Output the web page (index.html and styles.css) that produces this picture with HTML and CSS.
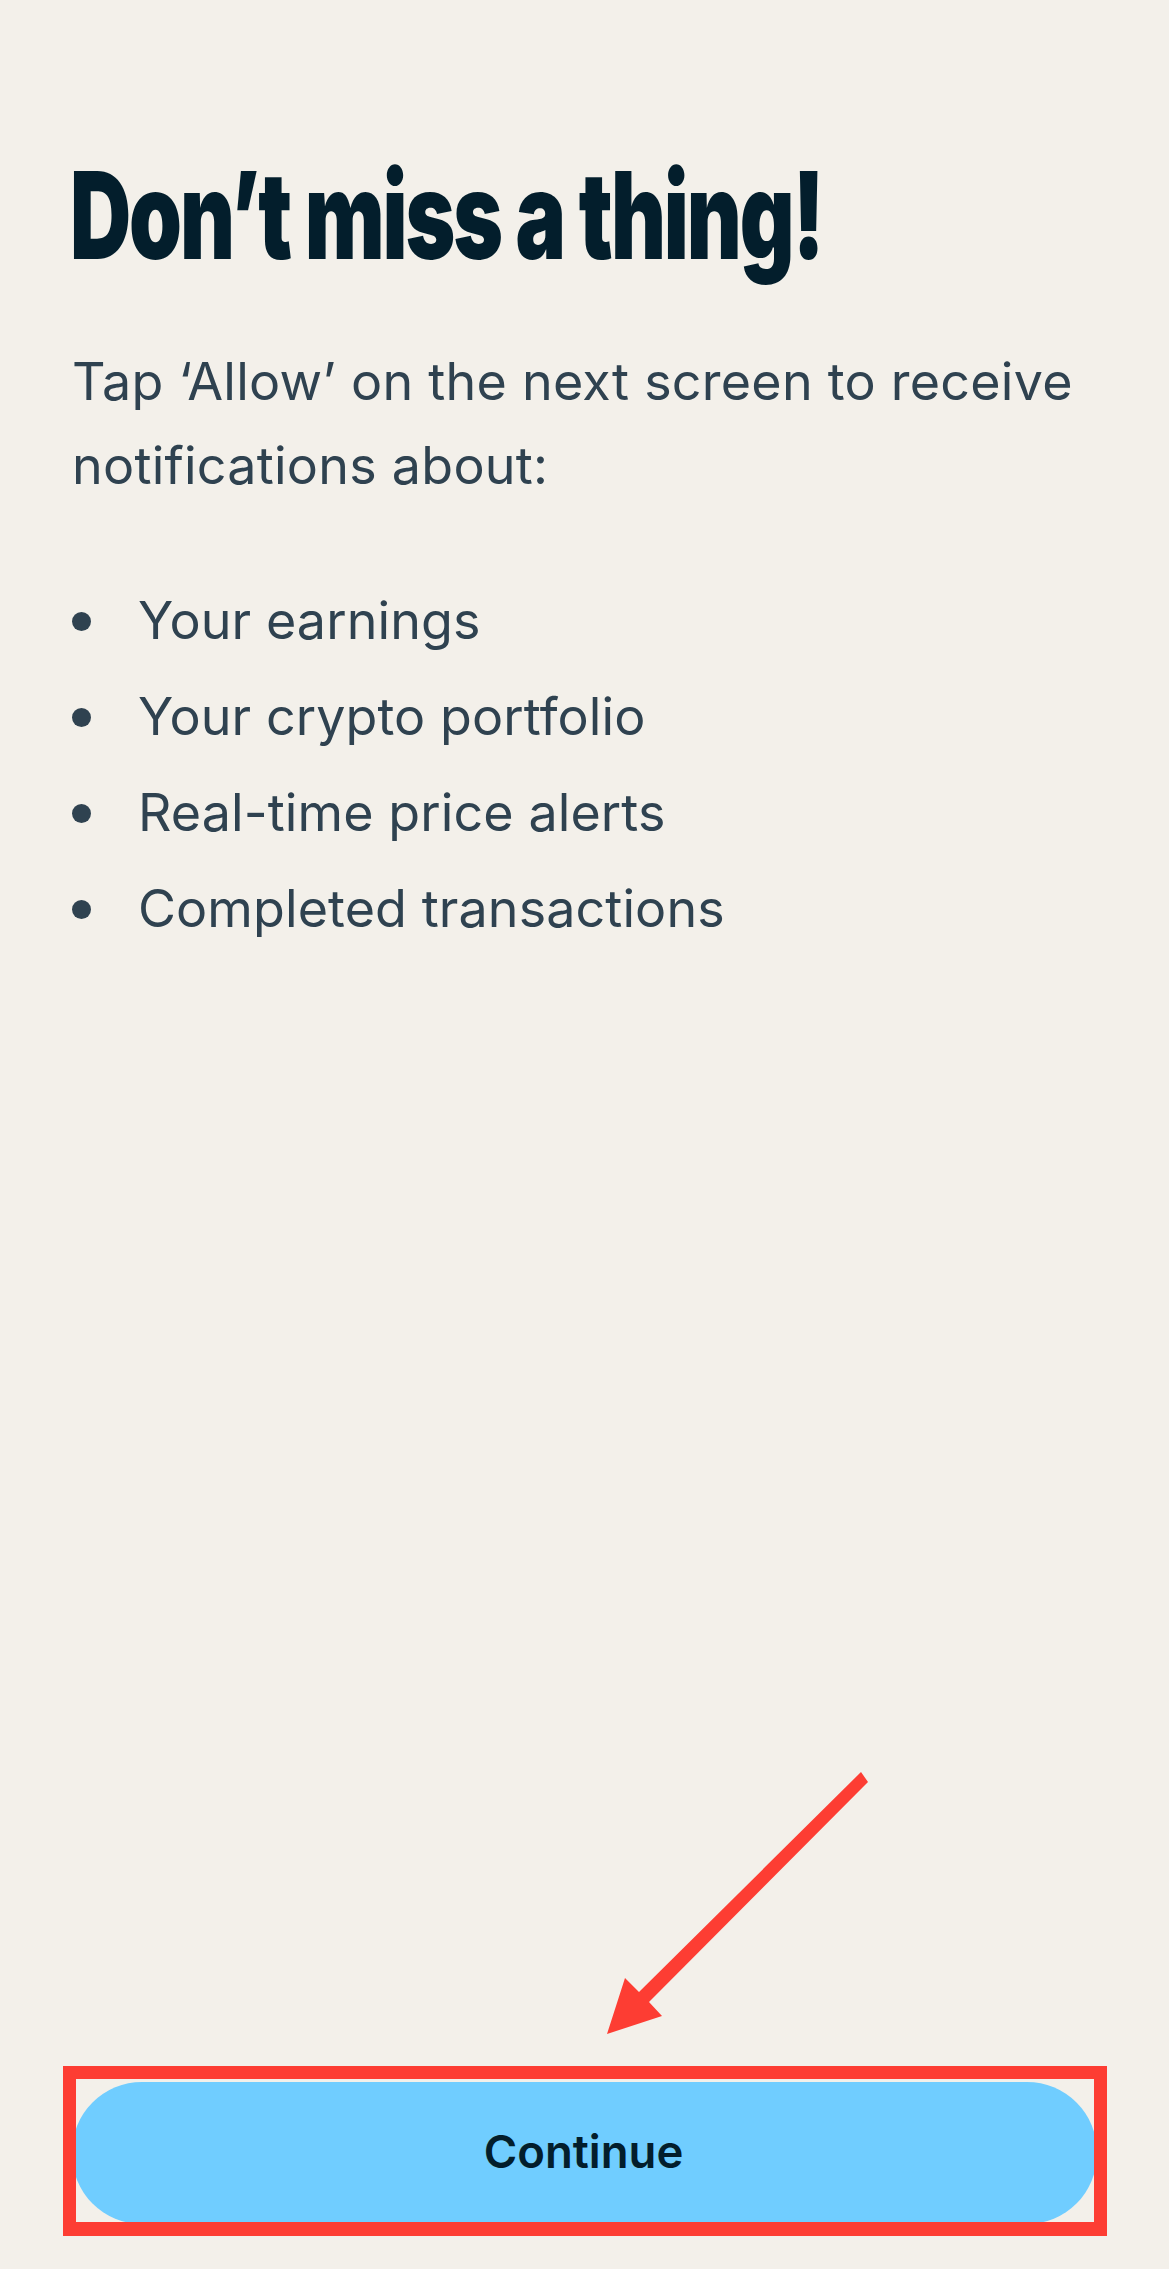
FILE: index.html
```html
<!DOCTYPE html>
<html lang="en">
<head>
<meta charset="utf-8">
<title>Don’t miss a thing!</title>
<link rel="stylesheet" href="styles.css">
</head>
<body>
<main class="screen">
  <h1 class="title">Don’t miss a thing!</h1>
  <p class="intro">Tap ‘Allow’ on the next screen to receive notifications about:</p>
  <ul class="topics">
    <li class="topic">Your earnings</li>
    <li class="topic">Your crypto portfolio</li>
    <li class="topic">Real-time price alerts</li>
    <li class="topic">Completed transactions</li>
  </ul>
  <button class="cta" type="button">Continue</button>
  <svg class="arrow" width="1169" height="2269" viewBox="0 0 1169 2269" aria-hidden="true">
    <path class="arrow-shape" d="M861 1772 L868 1782 L649 2002 L662 2016 L607 2034 L625 1978 L639 1992 Z"/>
  </svg>
  <div class="highlight"></div>
</main>
</body>
</html>
```
FILE: styles.css
```css
html, body {
  margin: 0;
  padding: 0;
  background: #f3f0ea;
}

.screen {
  position: relative;
  box-sizing: border-box;
  width: 1169px;
  height: 2269px;
  padding: 0 72px 45px;
  display: flex;
  flex-direction: column;
  overflow: hidden;
  font-family: Inter, "Noto Sans", sans-serif;
}

.title {
  margin: 150px 0 0 -2px;
  width: max-content;
  font-family: Inter, sans-serif;
  font-size: 121px;
  line-height: 130px;
  font-weight: 900;
  letter-spacing: -3px;
  color: #031e2c;
  white-space: nowrap;
  transform: scaleX(0.7);
  transform-origin: 0 50%;
}

.intro {
  margin: 60px 0 0;
  width: 1040px;
  font-size: 52px;
  line-height: 84px;
  font-weight: 400;
  letter-spacing: 0.25px;
  color: #2f4250;
}

.topics {
  margin: 65px 0 0;
  padding: 0;
  list-style: none;
  display: flex;
  flex-direction: column;
  font-size: 52px;
  line-height: 96px;
  letter-spacing: 0.1px;
  color: #2f4250;
}

.topic {
  display: flex;
  align-items: center;
  gap: 47px;
}

.topic::before {
  content: "";
  flex: none;
  width: 19px;
  height: 19px;
  border-radius: 50%;
  background: #2f4250;
}

.cta {
  margin: auto 0 0;
  width: 1025px;
  height: 142px;
  border: 0;
  border-radius: 70px;
  background: #70cdff;
  color: #031e2c;
  font-family: Inter, sans-serif;
  font-size: 45.5px;
  font-weight: 600;
  padding: 0 2px 4px 0;
}

.arrow {
  position: absolute;
  left: 0;
  top: 0;
}

.arrow-shape {
  fill: #fd3d33;
}

.highlight {
  position: absolute;
  left: 63px;
  top: 2066px;
  width: 1044px;
  height: 170px;
  box-sizing: border-box;
  border: 13px solid #fd3d33;
  border-bottom-width: 14px;
}
```
